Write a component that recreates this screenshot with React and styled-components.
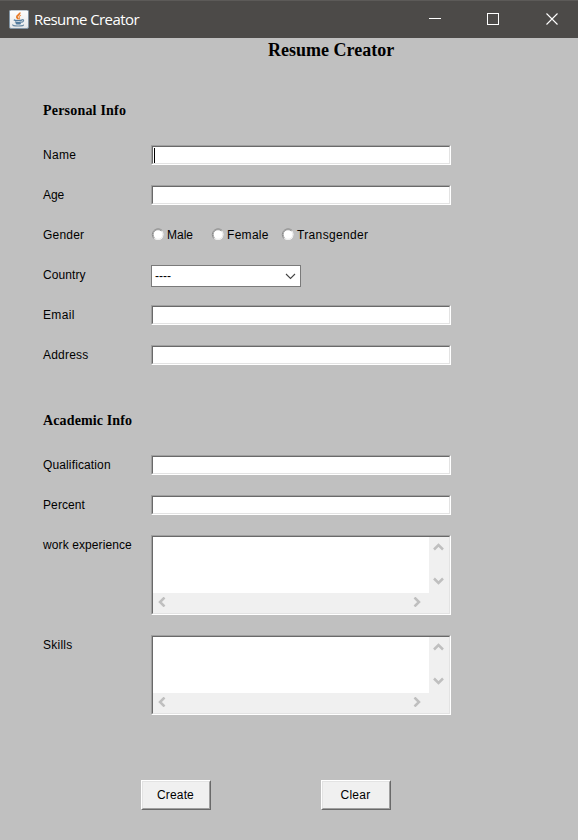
import React from "react";
import styled, { createGlobalStyle } from "styled-components";

const GlobalStyle = createGlobalStyle`
  * { box-sizing: border-box; }
  body { margin: 0; background: #c0c0c0; }
`;

const Window = styled.div`
  width: 578px;
  height: 840px;
  overflow: hidden;
  background: #c0c0c0;
  color: #000;
  font: 12px/20px "Liberation Sans", Arial, sans-serif;
`;

const TitleBar = styled.header`
  display: flex;
  align-items: center;
  height: 38px;
  padding-left: 9px;
  background: #4c4a48;
  border-top: 1px solid #5c5a58;
  color: #fff;
`;

const WindowTitle = styled.span`
  flex: 1;
  margin-left: 5px;
  padding-bottom: 1px;
  font: 15px/20px "Open Sans", "Noto Sans", sans-serif;
  letter-spacing: ${(p) => p.$spacing}px;
`;

const Controls = styled.div`
  display: grid;
  grid-template-columns: 58px 59px 12px;
  margin: 0 20px 2px 0;
`;

const Icon = styled.svg`
  display: block;
  flex: none;
`;

const Heading = styled.h1`
  margin: 2px 0 0 268px;
  font: bold 18px/20px "Liberation Serif", "Times New Roman", serif;
  height: 43px;
`;

const Section = styled.section`
  margin-left: 43px;
  padding-top: ${(p) => p.$top}px;
`;

const SectionTitle = styled.h2`
  margin: 0 0 24px;
  font: bold 14px/20px "Liberation Serif", "Times New Roman", serif;
  letter-spacing: ${(p) => p.$spacing}px;
`;

const Rows = styled.div`
  display: grid;
  gap: 20px;
`;

const Row = styled.div`
  display: grid;
  grid-template-columns: 108px 300px;
  height: ${(p) => p.$height || 20}px;
`;

const Text = styled.span`
  letter-spacing: ${(p) => p.$spacing ?? 0.1}px;
  white-space: nowrap;
`;

const Sunken = styled.div`
  border: 1px solid;
  border-color: #a0a0a0 #fff #fff #a0a0a0;
  height: ${(p) => p.$height || 20}px;
`;

const SunkenInner = styled.div`
  height: 100%;
  border: 1px solid;
  border-color: #696969 #e3e3e3 #e3e3e3 #696969;
  background: #fff;
`;

const Caret = styled.div`
  width: 1px;
  height: 15px;
  margin: 1px 0 0 1px;
  background: #000;
`;

const ScrollGrid = styled.div`
  display: grid;
  grid-template-columns: 1fr 20px;
  grid-template-rows: 1fr 20px;
  height: 100%;
  background: #f0f0f0;
`;

const TextPane = styled.div`
  background: #fff;
`;

const VerticalTrack = styled.div`
  display: flex;
  flex-direction: column;
  justify-content: space-between;
  align-items: center;
  padding: 6px 1px 8px 0;
`;

const HorizontalTrack = styled.div`
  display: flex;
  justify-content: space-between;
  align-items: center;
  padding: 0 8px 2px 5px;
`;

const Radios = styled.div`
  display: grid;
  grid-template-columns: 60px 70px 100px;
`;

const Radio = styled.label`
  display: flex;
  align-items: center;
  gap: 3px;
`;

const RadioMark = styled(Icon)`
  margin: 0 0 1px 0;
`;

const Select = styled.div`
  display: flex;
  align-items: center;
  justify-content: space-between;
  width: 150px;
  height: 22px;
  padding: 0 4px 0 3px;
  border: 1px solid #7a7a7a;
  background: #fff;
`;

const Actions = styled.div`
  display: flex;
  gap: 110px;
  margin: 65px 0 0 141px;
`;

const Button = styled.button`
  width: 70px;
  height: 30px;
  padding: 0;
  border: 1px solid;
  border-color: #fff #696969 #696969 #fff;
  background: #f0f0f0;
  color: #000;
  font: 12px/20px "Liberation Sans", Arial, sans-serif;
`;

const ButtonFace = styled.span`
  display: flex;
  align-items: center;
  justify-content: center;
  height: 28px;
  border: 1px solid;
  border-color: #e3e3e3 #a0a0a0 #a0a0a0 #e3e3e3;
  padding: 0 1px 1px 0;
`;

function JavaIcon() {
  return (
    <Icon width="20" height="20" viewBox="0 0 20 20" fill="none">
      <defs>
        <linearGradient id="tile" x1="0" y1="0" x2="0" y2="1">
          <stop offset="0" stopColor="#fff" />
          <stop offset="1" stopColor="#e4e6e8" />
        </linearGradient>
      </defs>
      <rect x="0.5" y="0" width="19" height="18.5" rx="1.5" fill="url(#tile)" stroke="#8295a5" />
      <path d="M10.8 2.6c.6 2-3.4 2.6-3 4.4.2.9 1.4 1.4 1.5 2.4" stroke="#e87925" strokeWidth="1.7" />
      <path d="M12 5.2c-2.3.9-2.2 1.8-1.5 2.6.4.5.1 1-.3 1.5" stroke="#ed9855" strokeWidth="1.1" />
      <path d="M4.8 9.9c1.4.8 6.2.8 8.2.2M6 11.7c1.4.9 4.9.8 6.6.2M6.8 13.3c1.2.6 3.6.6 5 .1" stroke="#527b9d" strokeWidth="1.3" />
      <path d="M12.7 9.8c2.6-.6 2.5 1.8-.2 2.7M4.2 14.5c-1.3.9.8 1.5 4.9 1.5 4.2 0 6-.6 5-1.4" stroke="#6688a3" strokeWidth="1.2" />
    </Icon>
  );
}

function Field({ caret }) {
  return (
    <Sunken>
      <SunkenInner>{caret && <Caret />}</SunkenInner>
    </Sunken>
  );
}

const chevrons = {
  up: "M1 6.5 5.5 2 10 6.5",
  down: "M1 1.5 5.5 6 10 1.5",
  left: "M6.5 0.5 2 5 6.5 9.5",
  right: "M1.5 0.5 6 5 1.5 9.5",
};

function ScrollArrow({ direction }) {
  const vertical = direction === "up" || direction === "down";
  return (
    <Icon width={vertical ? 11 : 8} height={vertical ? 8 : 10} fill="none">
      <path d={chevrons[direction]} stroke="#bfbfbf" strokeWidth="2.5" />
    </Icon>
  );
}

function TextArea() {
  return (
    <Sunken $height={80}>
      <SunkenInner>
        <ScrollGrid>
          <TextPane />
          <VerticalTrack>
            <ScrollArrow direction="up" />
            <ScrollArrow direction="down" />
          </VerticalTrack>
          <HorizontalTrack>
            <ScrollArrow direction="left" />
            <ScrollArrow direction="right" />
          </HorizontalTrack>
        </ScrollGrid>
      </SunkenInner>
    </Sunken>
  );
}

function RadioOption({ label, spacing }) {
  return (
    <Radio>
      <RadioMark width="13" height="13" viewBox="0 0 13 13" fill="none">
        <circle cx="7" cy="6.5" r="5.5" fill="#fff" />
        <path d="M2.9 10.6A5.8 5.8 0 0 1 11.1 2.4" stroke="#909090" />
        <path d="M3.6 9.9A4.8 4.8 0 0 1 10.4 3.1" stroke="#777" strokeWidth="0.7" />
        <path d="M3.6 9.9A4.8 4.8 0 0 0 10.4 3.1" stroke="#e3e3e3" strokeWidth="0.8" />
      </RadioMark>
      <Text $spacing={spacing}>{label}</Text>
    </Radio>
  );
}

function FormRow({ label, spacing, height, children }) {
  return (
    <Row $height={height}>
      <Text $spacing={spacing}>{label}</Text>
      {children}
    </Row>
  );
}

export default function App() {
  return (
    <Window>
      <GlobalStyle />
      <TitleBar>
        <JavaIcon />
        <WindowTitle $spacing={-0.58}>Resume Creator</WindowTitle>
        <Controls>
          <Icon width="12" height="12" shapeRendering="crispEdges">
            <rect y="5" width="12" height="1" fill="#fff" />
          </Icon>
          <Icon width="12" height="12" fill="none" shapeRendering="crispEdges">
            <rect x="0.5" y="0.5" width="11" height="11" stroke="#fff" />
          </Icon>
          <Icon width="12" height="12" fill="none">
            <path d="M0.5 0.5 11.5 11.5M11.5 0.5 0.5 11.5" stroke="#fff" strokeWidth="1.1" />
          </Icon>
        </Controls>
      </TitleBar>
      <Heading>Resume Creator</Heading>
      <Section $top={18}>
        <SectionTitle $spacing={0.2}>Personal Info</SectionTitle>
        <Rows>
          <FormRow label="Name" spacing={0.3}><Field caret /></FormRow>
          <FormRow label="Age" spacing={-0.1}><Field /></FormRow>
          <FormRow label="Gender" spacing={0.2}>
            <Radios>
              <RadioOption label="Male" spacing={0} />
              <RadioOption label="Female" spacing={0.3} />
              <RadioOption label="Transgender" spacing={0.35} />
            </Radios>
          </FormRow>
          <FormRow label="Country" spacing={0.1}>
            <Select>
              <Text $spacing={0}>----</Text>
              <Icon width="11" height="7" fill="none">
                <path d="M1 1 5.5 5.5 10 1" stroke="#444" strokeWidth="1.1" />
              </Icon>
            </Select>
          </FormRow>
          <FormRow label="Email" spacing={0.35}><Field /></FormRow>
          <FormRow label="Address" spacing={0.2}><Field /></FormRow>
        </Rows>
      </Section>
      <Section $top={46}>
        <SectionTitle $spacing={0.13}>Academic Info</SectionTitle>
        <Rows>
          <FormRow label="Qualification" spacing={0.13}><Field /></FormRow>
          <FormRow label="Percent"><Field /></FormRow>
          <FormRow label="work experience" height={80}><TextArea /></FormRow>
          <FormRow label="Skills" spacing={0.25} height={80}><TextArea /></FormRow>
        </Rows>
      </Section>
      <Actions>
        <Button><ButtonFace><Text $spacing={0.15}>Create</Text></ButtonFace></Button>
        <Button><ButtonFace><Text $spacing={0.25}>Clear</Text></ButtonFace></Button>
      </Actions>
    </Window>
  );
}
